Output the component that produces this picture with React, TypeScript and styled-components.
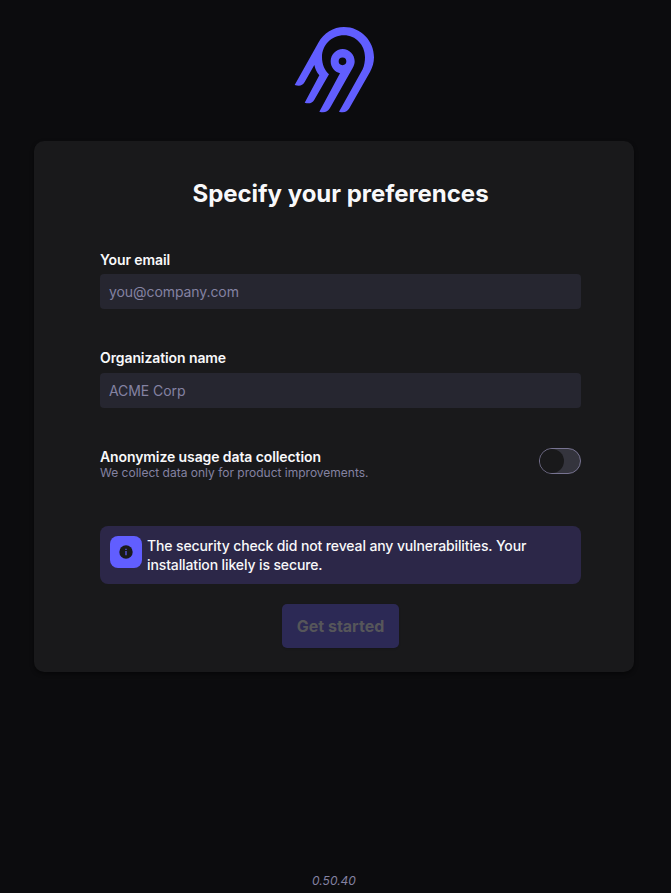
import React from "react";
import styled, { createGlobalStyle } from "styled-components";

const GlobalStyle = createGlobalStyle`
  * { box-sizing: border-box; }
  body {
    margin: 0;
    background: #0c0c0e;
    color: #f8f8fa;
    font-family: Inter, "Liberation Sans", sans-serif;
  }
`;

const Page = styled.main`
  display: flex;
  flex-direction: column;
  align-items: center;
  height: 893px;
  padding: 16px 3px 0 0;
  overflow: hidden;
`;

const Logo = styled.svg`
  display: block;
  flex: none;
  width: 100px;
  height: 106px;
`;

const Card = styled.section`
  flex: none;
  width: 600px;
  height: 531px;
  margin-top: 19px;
  padding: 38px 53px 0 66px;
  border-radius: 10px;
  background: #19191b;
  box-shadow: 0 2px 4px rgba(0, 0, 0, 0.45);
`;

const Title = styled.h1`
  margin: 0;
  font-size: 24px;
  line-height: 29px;
  font-weight: 700;
  letter-spacing: -0.03px;
  text-align: center;
`;

const Form = styled.form`
  display: flex;
  flex-direction: column;
  margin-top: 43px;
`;

const Field = styled.label<{ $gap: number }>`
  display: flex;
  flex-direction: column;
  gap: ${({ $gap }) => $gap}px;
  margin-bottom: 40px;
`;

const Label = styled.span`
  font-size: 14px;
  line-height: 17px;
  font-weight: 600;
  letter-spacing: -0.1px;
`;

const Input = styled.input`
  height: 35px;
  padding: 0 9px;
  border: 0;
  border-radius: 4px;
  outline: 0;
  background: #262630;
  color: #f8f8fa;
  font: 400 14px Inter, sans-serif;
  letter-spacing: -0.08px;
  &::placeholder { color: #8482a2; opacity: 1; }
`;

const ToggleRow = styled.div`
  display: flex;
  justify-content: space-between;
  height: 78px;
`;

const ToggleText = styled.div`
  display: flex;
  flex-direction: column;
`;

const Hint = styled.span`
  font-size: 12px;
  line-height: 15px;
  color: #8482a2;
`;

const Switch = styled.button`
  width: 42px;
  height: 26px;
  padding: 0;
  border: 1px solid #777391;
  border-radius: 13px;
  background: #34343d;
`;

const Knob = styled.span`
  display: block;
  width: 24px;
  height: 24px;
  border-radius: 50%;
  background: #19191b;
`;

const Notice = styled.div`
  display: flex;
  gap: 5px;
  height: 58px;
  padding: 10px;
  border-radius: 8px;
  background: #2c2748;
`;

const NoticeIcon = styled.span`
  display: flex;
  flex: none;
  align-items: center;
  justify-content: center;
  width: 32px;
  height: 32px;
  border-radius: 8px;
  background: #615eff;
`;

const NoticeText = styled.p`
  margin: 0;
  font-size: 14px;
  line-height: 19px;
  font-weight: 500;
  letter-spacing: -0.12px;
`;

const Submit = styled.button`
  align-self: center;
  width: 117px;
  height: 44px;
  margin-top: 20px;
  padding: 0;
  border: 0;
  border-radius: 5px;
  background: #2c2955;
  color: #56565a;
  font: 700 16px Inter, sans-serif;
  box-shadow: 0 1px 2px rgba(0, 0, 0, 0.15);
`;

const Version = styled.footer`
  margin-top: 201px;
  font-size: 12px;
  line-height: 15px;
  font-style: italic;
  color: #8482a2;
`;

const AppLogo = () => (
  <Logo viewBox="0 0 300 318" fill="#615eff" aria-hidden="true">
    <path d="M32 207 L103 80 C119 51 148 33 180 33 C230 33 270 74 270 124 C270 139 266 154 258 168 L196 277 C189 288 180 291 165 287 L236 160 C241 149 243 136 243 124 C243 87 215 58 180 58 C142 58 114 88 114 124 C114 145 122 163 135 175 L91 251 C84 262 75 264 62 260 L106 178 C98 169 94 159 91 147 L62 198 C55 209 47 211 32 207Z" />
    <path fillRule="evenodd" d="M106 287 L168 172 C152 168 140 154 140 136 C140 116 156 99 176 99 C196 99 212 116 212 136 C212 143 210 149 206 156 L138 276 C130 288 121 291 106 287Z M187 136 A11.5 11.5 0 1 0 164 136 A11.5 11.5 0 1 0 187 136Z" />
  </Logo>
);

const InfoIcon = () => (
  <svg width="14" height="14" viewBox="0 0 14 14" aria-hidden="true">
    <circle cx="7" cy="7" r="6.7" fill="#1a1a1b" />
    <path d="M6.4 3.7h1.2v1.2H6.4zM6.4 6.1h1.2v4.1H6.4z" fill="#615eff" />
  </svg>
);

export default function App() {
  return (
    <>
      <GlobalStyle />
      <Page>
        <AppLogo />
        <Card>
          <Title>Specify your preferences</Title>
          <Form>
            <Field $gap={6}>
              <Label>Your email</Label>
              <Input type="email" placeholder="you@company.com" />
            </Field>
            <Field $gap={7}>
              <Label>Organization name</Label>
              <Input type="text" placeholder="ACME Corp" />
            </Field>
            <ToggleRow>
              <ToggleText>
                <Label>Anonymize usage data collection</Label>
                <Hint>We collect data only for product improvements.</Hint>
              </ToggleText>
              <Switch type="button" role="switch" aria-checked="false" aria-label="Anonymize usage data collection">
                <Knob />
              </Switch>
            </ToggleRow>
            <Notice>
              <NoticeIcon><InfoIcon /></NoticeIcon>
              <NoticeText>The security check did not reveal any vulnerabilities. Your installation likely is secure.</NoticeText>
            </Notice>
            <Submit type="submit" disabled>Get started</Submit>
          </Form>
        </Card>
        <Version>0.50.40</Version>
      </Page>
    </>
  );
}
